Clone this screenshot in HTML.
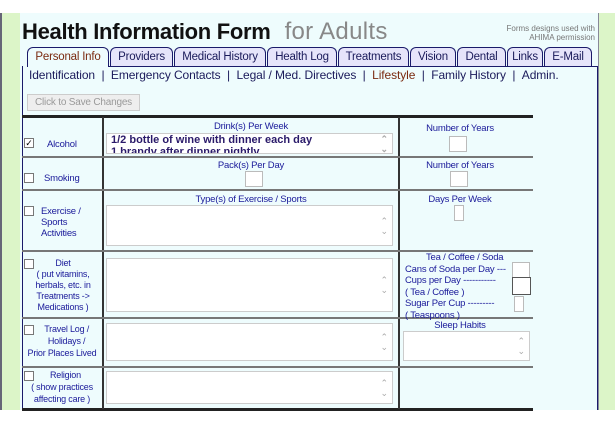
<!DOCTYPE html>
<html><head><meta charset="utf-8"><style>
*{margin:0;padding:0;box-sizing:border-box}
body{width:615px;height:424px;background:#fff;position:relative;overflow:hidden;font-family:"Liberation Sans",Arial,sans-serif}
.a{position:absolute}
.lbl{color:#1a1a9a;font-size:9.5px;white-space:nowrap;letter-spacing:-0.2px}
.tab{position:absolute;top:47px;height:20px;border:1px solid #1a1a6a;border-bottom:none;border-radius:6px 6px 0 0;background:#e6e4fa;color:#1a1a5a;font-size:11.5px;text-align:center;line-height:19px;white-space:nowrap;letter-spacing:-0.2px}
.ta{position:absolute;background:#fff;border:1px solid #ccc}
.ta:after{content:"\2303\A\2304";white-space:pre;position:absolute;right:4px;top:50%;transform:translateY(-50%);font-size:9px;line-height:10px;color:#aaa}
.box{position:absolute;background:#fff;border:1px solid #bbb}
.cb{position:absolute;width:10px;height:10px;border:1px solid #777;background:#fff}
.hl{position:absolute;left:22px;width:511px;height:2px;background:#777}
</style></head><body>
<div class="a" style="left:0;top:13px;width:20px;height:397px;background:#dcf5c8;border-left:2px solid #667"></div>
<div class="a" style="left:598px;top:13px;width:17px;height:397px;background:#dcf5c8;border-left:1px solid #889"></div>
<div class="a" style="left:20px;top:13px;width:578px;height:397px;background:#eefcfd"></div>
<div class="a" style="left:22px;top:18px;font-size:22px;font-weight:bold;color:#111;white-space:nowrap;letter-spacing:-0.3px">Health Information Form<span style="font-weight:normal;color:#888;margin-left:14px;font-size:24px;letter-spacing:0.3px">for Adults</span></div>
<div class="a" style="left:480px;top:24px;width:115px;text-align:right;font-size:8px;line-height:9px;color:#777;white-space:nowrap">Forms designs used with<br>AHIMA permission</div>
<div class="tab" style="left:27px;width:82px;background:#eefcfd;color:#7a2a10">Personal Info</div>
<div class="tab" style="left:110px;width:63px">Providers</div>
<div class="tab" style="left:174px;width:92px">Medical History</div>
<div class="tab" style="left:267px;width:70px">Health Log</div>
<div class="tab" style="left:338px;width:71px">Treatments</div>
<div class="tab" style="left:410px;width:46px">Vision</div>
<div class="tab" style="left:457px;width:49px">Dental</div>
<div class="tab" style="left:507px;width:36px">Links</div>
<div class="tab" style="left:544px;width:48px">E-Mail</div>
<div class="a" style="left:22px;top:66px;width:576px;height:344px;border-left:1px solid #1a1a6a;border-right:1px solid #1a1a6a"></div>
<div class="a" style="left:109px;top:66px;width:489px;height:1px;background:#1a1a6a"></div>
<div class="a" style="left:29px;top:68px;font-size:12px;color:#1a1a5a;white-space:nowrap;letter-spacing:-0.1px">Identification &nbsp;| &nbsp;Emergency Contacts &nbsp;| &nbsp;Legal / Med. Directives &nbsp;| &nbsp;<span style="color:#7a2a10">Lifestyle</span> &nbsp;| &nbsp;Family History &nbsp;| &nbsp;Admin.</div>
<div class="a" style="left:27px;top:94px;width:113px;height:17px;background:#eee;border:1px solid #ccc;color:#999;font-size:10px;text-align:center;line-height:15px;white-space:nowrap;letter-spacing:-0.2px">Click to Save Changes</div>
<div class="a" style="left:22px;top:115px;width:511px;height:3px;background:#222"></div>
<div class="a" style="left:22px;top:408px;width:511px;height:3px;background:#222"></div>
<div class="a" style="left:102px;top:117px;width:2px;height:292px;background:#333"></div>
<div class="a" style="left:398px;top:117px;width:2px;height:292px;background:#333"></div>
<div class="hl" style="top:156px"></div><div class="hl" style="top:189px"></div><div class="hl" style="top:250px"></div><div class="hl" style="top:317px"></div><div class="hl" style="top:366px"></div>
<!-- row1 -->
<div class="cb" style="left:24px;top:138px;font-size:9px;line-height:8px;text-align:center">✓</div>
<div class="a lbl" style="left:47px;top:139px">Alcohol</div>
<div class="a lbl" style="left:104px;top:121px;width:294px;text-align:center">Drink(s) Per Week</div>
<div class="ta" style="left:106px;top:133px;width:287px;height:21px;overflow:hidden;font-size:11px;font-weight:bold;color:#2a1a6a;padding:0 4px;line-height:12px;white-space:nowrap">1/2 bottle of wine with dinner each day<br>1 brandy after dinner nightly</div>
<div class="a lbl" style="left:400px;top:123px;width:120px;text-align:center">Number of Years</div>
<div class="box" style="left:449px;top:136px;width:18px;height:16px"></div>
<!-- row2 -->
<div class="cb" style="left:24px;top:173px"></div>
<div class="a lbl" style="left:44px;top:173px">Smoking</div>
<div class="a lbl" style="left:104px;top:160px;width:294px;text-align:center">Pack(s) Per Day</div>
<div class="box" style="left:245px;top:171px;width:18px;height:16px"></div>
<div class="a lbl" style="left:400px;top:160px;width:120px;text-align:center">Number of Years</div>
<div class="box" style="left:450px;top:171px;width:18px;height:16px"></div>
<!-- row3 -->
<div class="cb" style="left:24px;top:206px"></div>
<div class="a lbl" style="left:41px;top:206px;line-height:11px">Exercise /<br>Sports<br>Activities</div>
<div class="a lbl" style="left:104px;top:194px;width:294px;text-align:center">Type(s) of Exercise / Sports</div>
<div class="ta" style="left:106px;top:205px;width:287px;height:41px"></div>
<div class="a lbl" style="left:400px;top:194px;width:120px;text-align:center">Days Per Week</div>
<div class="box" style="left:454px;top:205px;width:10px;height:16px"></div>
<!-- row4 -->
<div class="cb" style="left:24px;top:259px"></div>
<div class="a lbl" style="left:32px;top:258px;line-height:11px;text-align:center;width:62px;font-size:9px">Diet<br>( put vitamins,<br>herbals, etc. in<br>Treatments -&gt;<br>Medications )</div>
<div class="ta" style="left:106px;top:258px;width:287px;height:54px"></div>
<div class="a lbl" style="left:405px;top:252px;line-height:11.5px;font-size:9.5px;color:#1a1a9a">
<div style="padding-left:21px">Tea / Coffee / Soda</div>
<div>Cans of Soda per Day ---</div>
<div>Cups per Day -----------</div>
<div>( Tea / Coffee )</div>
<div>Sugar Per Cup ---------</div>
<div>( Teaspoons )</div></div>
<div class="box" style="left:512px;top:262px;width:18px;height:16px"></div>
<div class="box" style="left:512px;top:277px;width:19px;height:18px;border-color:#555"></div>
<div class="box" style="left:514px;top:296px;width:10px;height:16px"></div>
<!-- row5 -->
<div class="cb" style="left:24px;top:325px"></div>
<div class="a lbl" style="left:22px;top:323px;line-height:12px;text-align:center;width:80px;font-size:9px">&nbsp;&nbsp;&nbsp;&nbsp;Travel Log /<br>&nbsp;&nbsp;&nbsp;&nbsp;Holidays /<br>Prior Places Lived</div>
<div class="ta" style="left:106px;top:323px;width:287px;height:38px"></div>
<div class="a lbl" style="left:400px;top:320px;width:120px;text-align:center">Sleep Habits</div>
<div class="ta" style="left:403px;top:331px;width:127px;height:30px"></div>
<!-- row6 -->
<div class="cb" style="left:24px;top:371px"></div>
<div class="a lbl" style="left:25px;top:369px;line-height:12px;text-align:center;width:74px;font-size:9px">&nbsp;&nbsp;&nbsp;Religion<br>( show practices<br>affecting care )</div>
<div class="ta" style="left:106px;top:371px;width:287px;height:33px"></div>
</body></html>
